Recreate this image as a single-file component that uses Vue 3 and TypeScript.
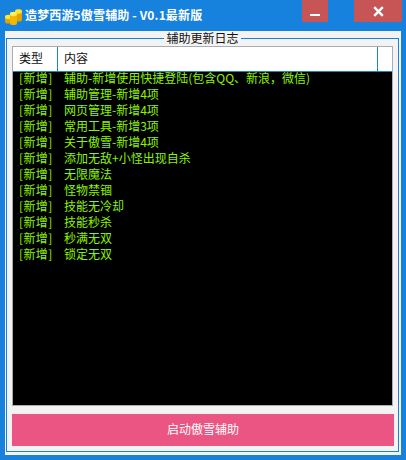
<script setup lang="ts">
const rows: string[] = [
  '辅助-新增使用快捷登陆(包含QQ、新浪\uFF0C微信)',
  '辅助管理-新增4项',
  '网页管理-新增4项',
  '常用工具-新增3项',
  '关于傲雪-新增4项',
  '添加无敌+小怪出现自杀',
  '无限魔法',
  '怪物禁锢',
  '技能无冷却',
  '技能秒杀',
  '秒满无双',
  '锁定无双',
]
</script>

<template>
  <div class="window">
    <header class="titlebar">
      <svg class="logo" width="17" height="16" viewBox="0 0 17 16" aria-hidden="true">
        <rect x="10" y="0.5" width="7" height="12" rx="2" fill="#e0a400" />
        <ellipse cx="13.5" cy="2.5" rx="3.5" ry="2.2" fill="#ffe23a" />
        <rect x="0" y="6" width="7" height="8.5" rx="2" fill="#e0a400" />
        <ellipse cx="3.5" cy="8" rx="3.5" ry="2.2" fill="#ffe23a" />
        <rect x="5" y="3" width="7" height="13" rx="2" fill="#f2b800" />
        <ellipse cx="8.5" cy="5" rx="3.5" ry="2.2" fill="#fff060" />
      </svg>
      <span class="title">造梦西游5傲雪辅助 - V0.1最新版</span>
      <div class="controls">
        <button class="ctl min" type="button" aria-label="最小化"><i class="dash"></i></button>
        <button class="ctl close" type="button" aria-label="关闭">
          <svg width="11" height="11" viewBox="0 0 11 11">
            <path d="M1.2 1.2 9.8 9.8M9.8 1.2 1.2 9.8" stroke="#fff" stroke-width="2.4" fill="none" />
          </svg>
        </button>
      </div>
    </header>

    <main class="panel">
      <fieldset class="group">
        <legend class="legend">辅助更新日志</legend>
        <section class="table">
          <div class="thead">
            <div class="th type">类型</div>
            <div class="th content">内容</div>
            <div class="th spare"></div>
          </div>
          <ul class="list">
            <li v-for="(row, i) in rows" :key="i" class="row">
              <span class="tag">[新增]</span>
              <span class="text">{{ row }}</span>
            </li>
          </ul>
        </section>
        <button class="start" type="button">启动傲雪辅助</button>
      </fieldset>
    </main>
  </div>
</template>

<style scoped>
.window {
  width: 406px;
  height: 460px;
  box-sizing: border-box;
  background: #1682de;
  display: flex;
  flex-direction: column;
  font-family: "Noto Sans CJK SC", "Liberation Sans", sans-serif;
  font-size: 12px;
}
.titlebar {
  height: 31px;
  flex: none;
  display: flex;
  align-items: flex-start;
}
.logo {
  margin: 9px 0 0 5px;
  flex: none;
}
.title {
  margin: 6px 0 0 3px;
  line-height: 18px;
  color: #fff;
  font-size: 12px;
  font-weight: 700;
  letter-spacing: 0.15px;
  white-space: nowrap;
}
.controls {
  margin-left: auto;
  margin-right: 4px;
  display: flex;
  gap: 26px;
}
.ctl {
  height: 22px;
  padding: 0;
  border: 0;
  background: #c85556;
  display: flex;
  align-items: center;
  justify-content: center;
}
.min { width: 26px; }
.close { width: 48px; }
.dash {
  display: block;
  width: 10px;
  height: 2px;
  margin-top: 8px;
  background: #fff;
}
.panel {
  flex: none;
  width: 396px;
  height: 424px;
  margin-left: 5px;
  box-sizing: border-box;
  background: #f4f3f3;
  padding: 0 2px 3px 1px;
  display: flex;
}
.group {
  flex: 1;
  min-width: 0;
  margin: 0;
  box-sizing: border-box;
  border: 1px solid #1682de;
  padding: 0 5px 7px 5px;
  display: flex;
  flex-direction: column;
}
.legend {
  margin: 0 auto;
  padding: 0 2px;
  line-height: 14px;
  font-size: 12px;
  color: #111;
}
.table {
  flex: none;
  height: 360px;
  margin-top: 1px;
  box-sizing: border-box;
  border: 1px solid #a9adb2;
  display: flex;
  flex-direction: column;
}
.thead {
  flex: none;
  height: 24px;
  display: flex;
  background: #fff;
  border-bottom: 1px solid #1682de;
}
.th {
  line-height: 22px;
  color: #111;
  padding-left: 6px;
  box-sizing: border-box;
}
.type {
  width: 45px;
  border-right: 1px solid #1682de;
}
.content {
  width: 320px;
  border-right: 1px solid #1682de;
}
.spare {
  flex: 1;
}
.list {
  flex: 1;
  margin: 0;
  padding: 0;
  list-style: none;
  background: #000;
}
.row {
  height: 16px;
  line-height: 12px;
  color: #8cf400;
  display: flex;
  white-space: nowrap;
}
.tag {
  width: 45px;
  padding-left: 6px;
  flex: none;
  letter-spacing: 0.4px;
}
.start {
  flex: none;
  height: 32px;
  margin-top: 8px;
  width: 382px;
  border: 0;
  padding: 0 0 4px;
  background: #ea5583;
  color: #fff;
  font: inherit;
  font-size: 12px;
}
</style>

<style>
html, body { margin: 0; background: #1682de; }
</style>
